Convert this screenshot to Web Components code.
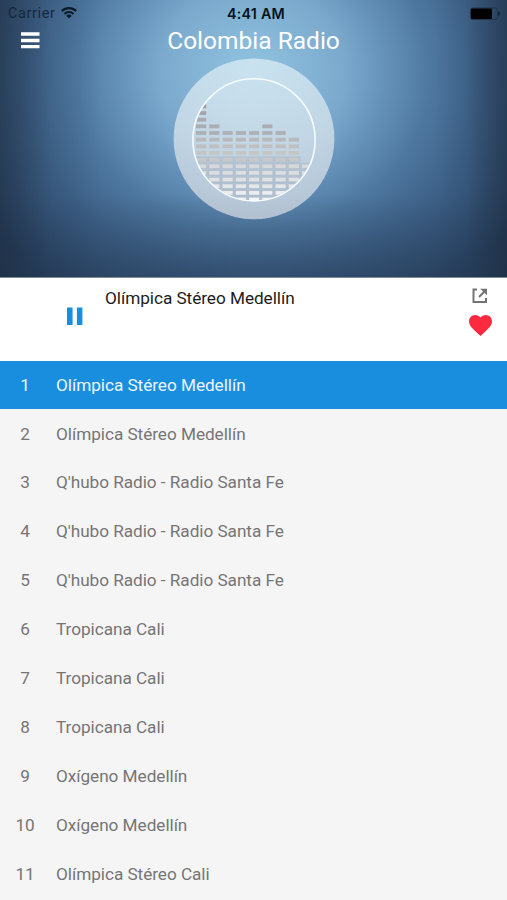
<!DOCTYPE html>
<html lang="en">
<head>
<meta charset="utf-8">
<title>Colombia Radio</title>
<style>
html,body{margin:0;height:100%}
body{font-family:Roboto,"Liberation Sans",sans-serif;background:#f5f5f5;overflow:hidden}
</style>
</head>
<body>
<radio-app></radio-app>
<script>
const define = (name, html, setup) => customElements.define(name, class extends HTMLElement {
  connectedCallback() {
    if (this.shadowRoot) return;
    this.attachShadow({ mode: 'open' }).innerHTML = html;
    if (setup) setup(this.shadowRoot, this);
  }
});

define('status-bar', `<style>
:host{display:grid;grid-template-columns:1fr auto 1fr;height:27px;align-items:center;color:#0b1723;font-size:14.5px}
.l{display:flex;align-items:center;gap:6px;padding:0 0 1px 8px;letter-spacing:.6px;color:#14283c}
.l span{padding-top:1px}
.t{font:600 14.3px/27px Inter,sans-serif;letter-spacing:.2px;color:#06111c;padding:0 0 0 5px}
.b{justify-self:end;padding-right:6px}
svg{display:block}
</style>
<div class="l"><span>Carrier</span><svg width="16" height="12" viewBox="0 0 16 12"><g fill="none" stroke="#0b1a29" stroke-width="2.1"><path d="M.8 4.1C4.9.1 11.1.1 15.2 4.1"/><path d="M3.4 6.9C6 4.4 10 4.4 12.6 6.9"/></g><path d="M8 11.6 5.2 8.8Q8 6.4 10.8 8.8Z" fill="#0b1a29"/></svg></div>
<span class="t">4:41 AM</span>
<svg class="b" width="31" height="14" viewBox="0 0 31 14"><rect x=".5" y="1" width="27" height="11.5" rx="2" fill="none" stroke="#1c364e"/><rect x="1" y="1.5" width="21" height="10.5" rx="1" fill="#000"/><path d="M28.6 4.8q2 2 0 4Z" fill="#10202f" stroke="#10202f" stroke-width=".6"/></svg>`);

define('app-title', `<style>
:host{display:grid;grid-template-columns:1fr auto 1fr;height:27px;align-items:center;color:#fff}
svg{display:block;margin-left:21px}
span{font-size:24.5px;line-height:27px}
</style>
<svg width="19" height="17" viewBox="0 0 19 17"><path d="M0 2H18.5M0 8.5H18.5M0 14.6H18.5" stroke="#fff" stroke-width="3.4"/></svg>
<span><slot></slot></span>`);

define('equalizer-disc', `<style>:host{display:block}svg{display:block}</style>
<svg width="162" height="162" viewBox="173 58 162 162">
<defs><clipPath id="c"><circle cx="254" cy="139.8" r="60.5"/></clipPath>
<linearGradient id="d" x1="0" y1="0" x2="0" y2="1"><stop offset="0" stop-color="#e9f4f9" stop-opacity=".64"/><stop offset="1" stop-color="#e9e9ec" stop-opacity=".64"/></linearGradient></defs>
<circle cx="254" cy="138.8" r="80.4" fill="url(#d)"/>
<g id="bars" clip-path="url(#c)"></g>
<circle cx="254" cy="139.8" r="61.1" fill="none" stroke="#f6fcff" stroke-width="1.6"/>
</svg>`, root => {
  const tops = [0, 3, 4, 4, 4, 3, 4, 5, 9];
  const shades = ['#9e9da2','#a3a4a9','#a9abb0','#aaadb2','#adb0b4','#b9b9bb','#c0bfbf','#c6c5c4','#c8c8ca','#d7d8da','#dcddde','#e0e1e3','#e5e6e8','#ebedef','#f3f5f6'];
  let under = '', over = '';
  tops.forEach((top, c) => {
    for (let r = top; r < 15; r++) {
      const y = 106.4 + r * 6.65, x = 201.1 + c * 13.25;
      if (r > 7) under += `<rect x="${x - 6.6}" y="${y - 3.3}" width="13.2" height="6.6" fill="#a3b1c2"/>`;
      over += `<rect x="${x - 5.1}" y="${y - 1.9}" width="10.2" height="3.8" fill="${shades[r]}"/>`;
    }
  });
  root.getElementById('bars').innerHTML = `<g opacity=".5">${under}</g>${over}`;
});

define('hero-panel', `<style>
:host{display:flex;flex-direction:column;height:277px;border-bottom:1px solid #7e8b99;
background:
 linear-gradient(90deg,rgba(26,38,54,.5),rgba(28,44,64,.12) 10%,transparent 20%,transparent 86%,rgba(28,44,64,.1) 92%,rgba(26,38,54,.5)),
 linear-gradient(180deg,transparent 70%,rgba(31,50,72,.38) 100%),
 radial-gradient(ellipse 310px 275px at 252px 72px,#91c4e1 0,#7ba9cd 30%,#628eb6 45%,#4e779f 58%,#3e6188 74%,#2b4566 100%)}
equalizer-disc{margin:4px 0 0 173px}
</style><status-bar></status-bar><app-title>Colombia Radio</app-title><equalizer-disc></equalizer-disc>`);

define('now-playing', `<style>
:host{display:grid;grid-template-columns:105px 1fr 54px;height:82.5px;background:#fff;color:#1c1c1c}
.p{padding:29px 0 0 67px}
.n{font-size:17.2px;letter-spacing:-.04px;line-height:20px;padding-top:10px}
.a{display:flex;flex-direction:column;align-items:center;gap:11px;padding-top:9.5px}
svg{display:block}
</style>
<div class="p"><svg width="16" height="19" viewBox="0 0 16 19"><path d="M0 .5H5.6V18H0ZM9.9.5H15.4V18H9.9Z" fill="#198ede"/></svg></div>
<div class="n"><slot></slot></div>
<div class="a">
<svg width="16" height="16" viewBox="0 0 16 16"><path d="M5 1.6H1.5V14H14V10M7 9 12.5 3.5" fill="none" stroke="#747474" stroke-width="2"/><path d="M8.2.7H15V7.2Z" fill="#747474"/></svg>
<svg width="23" height="21" viewBox="2 3 20 18.35" preserveAspectRatio="none"><path d="M12 21.35l-1.45-1.32C5.4 15.36 2 12.28 2 8.5 2 5.42 4.42 3 7.5 3c1.74 0 3.41.81 4.5 2.09C13.09 3.81 14.76 3 16.5 3 19.58 3 22 5.42 22 8.5c0 3.78-3.4 6.86-8.55 11.54z" fill="#fb2a3e"/></svg>
</div>`);

define('station-row', `<style>
:host{display:grid;grid-template-columns:50px 1fr;column-gap:6px;height:48.9px;align-items:center;color:#757575;font-size:17.2px;letter-spacing:-.04px}
:host([active]){background:#198ede;color:#e9f6ff}
span{padding-bottom:.6px}
.n{text-align:center}
</style><span class="n"></span><span><slot></slot></span>`,
 (root, host) => { root.querySelector('.n').textContent = host.getAttribute('number'); });

const stations = ['Olímpica Stéreo Medellín','Olímpica Stéreo Medellín',"Q'hubo Radio - Radio Santa Fe","Q'hubo Radio - Radio Santa Fe","Q'hubo Radio - Radio Santa Fe",'Tropicana Cali','Tropicana Cali','Tropicana Cali','Oxígeno Medellín','Oxígeno Medellín','Olímpica Stéreo Cali'];
define('radio-app', `<style>:host{display:block;height:900px;overflow:hidden;background:#f5f5f5}</style>
<hero-panel></hero-panel><now-playing>Olímpica Stéreo Medellín</now-playing>
<main>${stations.map((s, i) => `<station-row number="${i + 1}"${i ? '' : ' active'}>${s}</station-row>`).join('')}</main>`);
</script>
</body>
</html>
